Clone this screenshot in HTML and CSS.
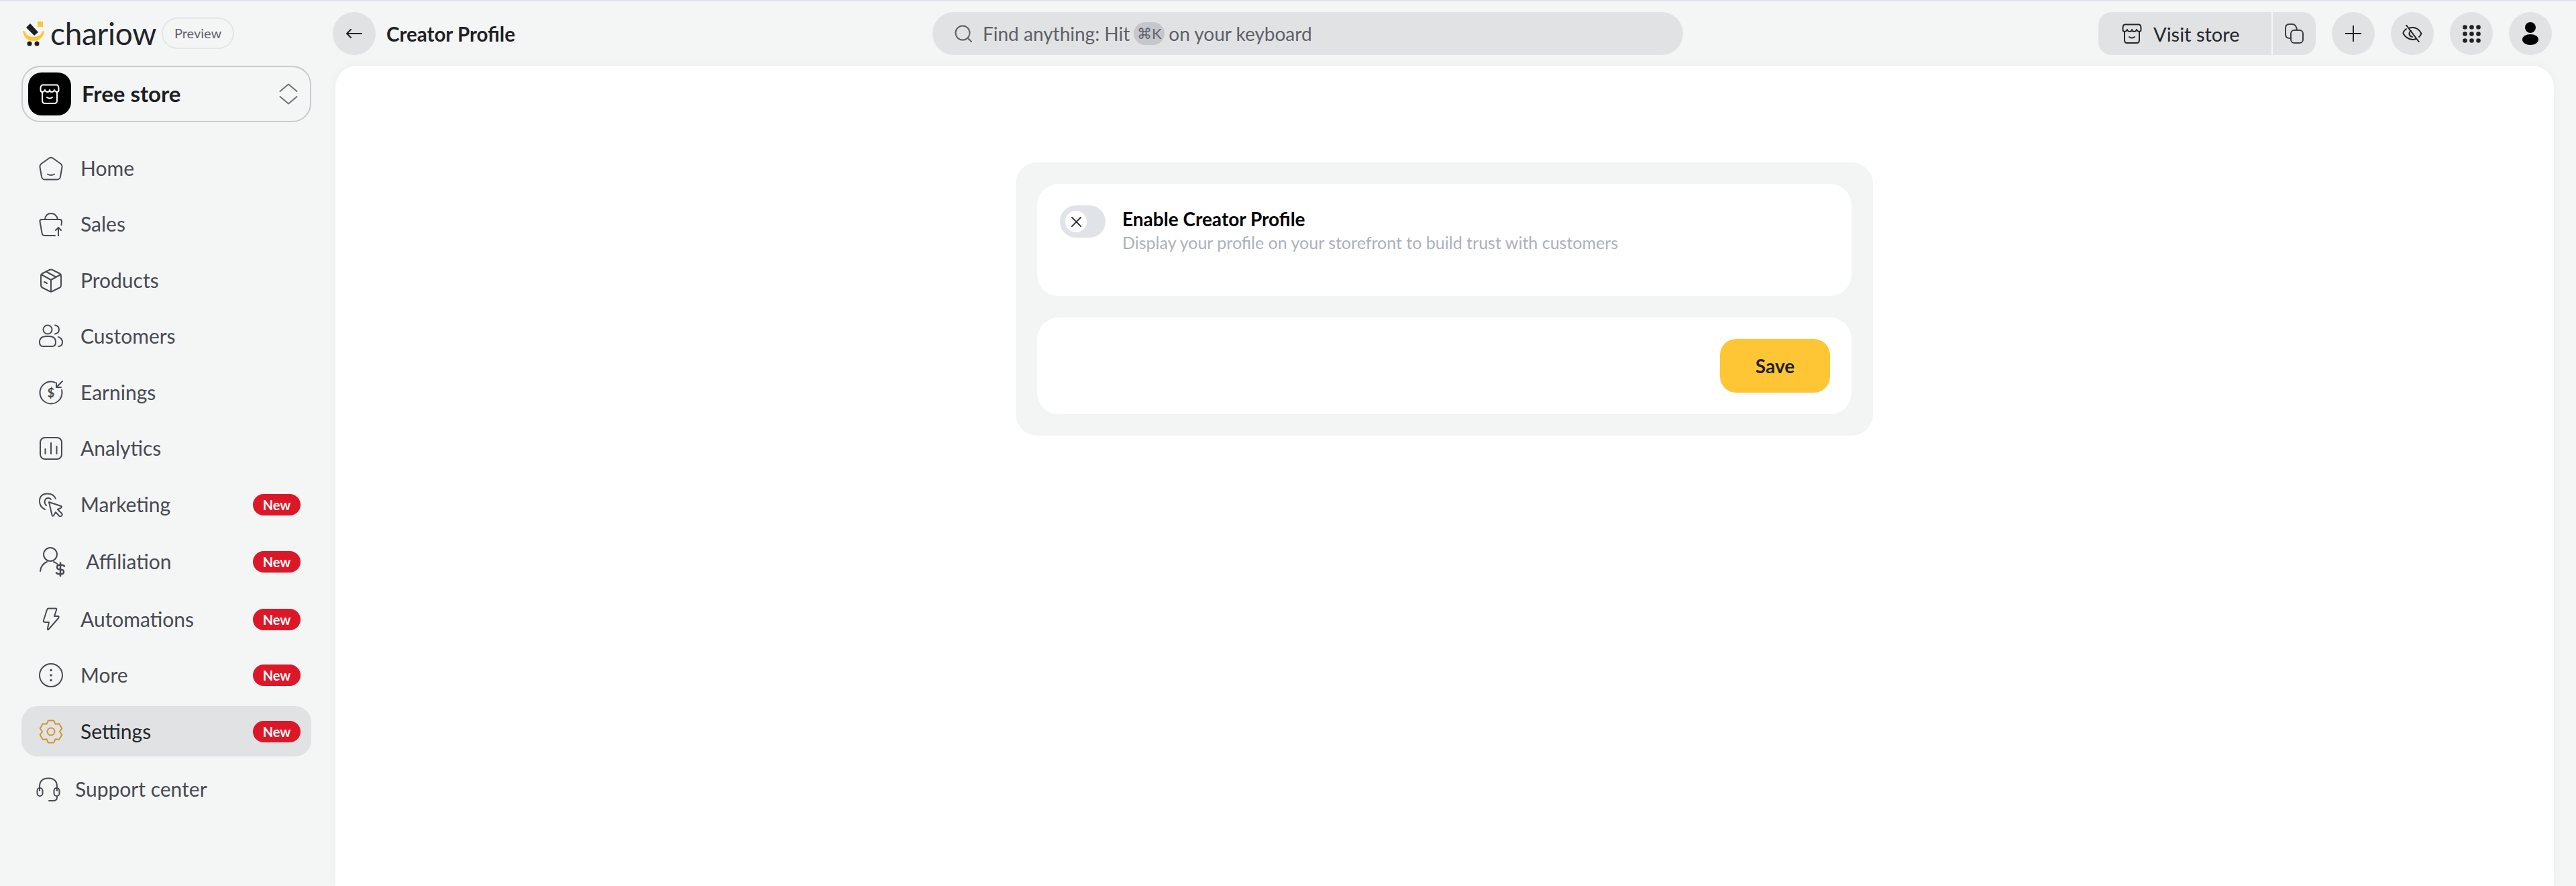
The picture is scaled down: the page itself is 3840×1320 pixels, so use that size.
FILE: index.html
```html
<!DOCTYPE html>
<html lang="en">
<head>
    <meta charset="UTF-8">
    <title>Creator Profile</title>
    <link rel="stylesheet" href="styles.css">
</head>
<body>
    <svg class="sprite" aria-hidden="true">
        <symbol id="store" viewBox="0 0 30 30">
            <path d="M4 12 V25 Q4 29 8 29 H22 Q26 29 26 25 V12"/>
            <path d="M5 1.500 H25 Q28 1.500 28.500 6 V9 Q28.500 12 26 12 Q23 12 22 9 Q21 12 18.500 12 Q15 12 15 9 Q15 12 11.500 12 Q9 12 8 9 Q7 12 4 12 Q1.500 12 1.500 9 V6 Q2 1.500 5 1.500 Z"/>
            <path d="M11 20 Q15 23 19 20"/>
        </symbol>
    </svg>

    <div class="top-strip"></div>
    <div class="app">
        <aside class="sidebar">
            <div class="brand">
                <svg class="brand-mark" viewBox="0 0 36 38">
                    <path d="M2 16 Q5 30 18 30 Q31 30 34 16 Q33 14 31 16 Q28 24 18 24 Q8 24 5 16 Q3 14 2 16 Z" fill="#fec635"/>
                    <rect x="24" y="1" width="8" height="8" fill="#fec635"/>
                    <path d="M7 10 L13 4 L25 17 L19 22 Z" fill="#1d1f24"/>
                    <circle cx="12" cy="34" r="3.500" fill="#1d1f24"/>
                    <circle cx="23" cy="34" r="3.500" fill="#1d1f24"/>
                </svg>
                <span class="brand-name">chariow</span>
                <span class="preview-pill">Preview</span>
            </div>

            <button class="store-select">
                <span class="store-icon"><svg class="icon-store-light"><use href="#store"/></svg></span>
                <span class="store-name">Free store</span>
                <svg class="chevrons" viewBox="0 0 28 32"><path d="M1.500 12 L14 1.500 L26.500 12 M1.500 20 L14 30.500 L26.500 20"/></svg>
            </button>

            <nav class="nav">
                <a class="nav-item">
                    <svg class="nav-icon" viewBox="0 0 36 36"><path d="M15.500 2.500 Q18 .8 20.500 2.500 L32.500 11 Q35 13 34.500 16 L32 30 Q31.500 34.500 27 34.500 H9 Q4.500 34.500 4 30 L1.500 16 Q1 13 3.500 11 Z"/><path d="M13 26.500 Q18 29.500 23 26.500"/></svg>
                    <span>Home</span>
                </a>
                <a class="nav-item">
                    <svg class="nav-icon" viewBox="0 0 36 36"><path d="M9 11 Q10 2 18 2 Q26 2 28 11"/><path d="M24 35 H9 Q5 35 4.500 31 L1.500 14 Q1 11 4 11 H31 Q34 11 34 14 L33.500 19"/><path d="M29 36 V23 M25 27 L29 23 L33 27"/></svg>
                    <span>Sales</span>
                </a>
                <a class="nav-item">
                    <svg class="nav-icon" viewBox="0 0 36 36"><path d="M16 2 Q18 1 20 2 L31 7.500 Q33 8.500 33 11 V25 Q33 27.500 31 28.500 L20 34 Q18 35 16 34 L5 28.500 Q3 27.500 3 25 V11 Q3 8.500 5 7.500 Z"/><path d="M3.500 9 L18 17 L32.500 9 M18 17 V34.500 M10.500 4.500 L25 12.500 M8 20 L12 22"/></svg>
                    <span>Products</span>
                </a>
                <a class="nav-item">
                    <svg class="nav-icon" viewBox="0 0 36 36"><circle cx="13" cy="8" r="6.500"/><path d="M24 1.500 Q30 2.500 30 8 Q30 13.500 24 14.500"/><path d="M1 27 Q1 18 11 18 H15 Q25 18 25 27 Q25 33 20 33 H6 Q1 33 1 27 Z"/><path d="M29 19 Q35 21 35 27 Q35 33 29 33"/></svg>
                    <span>Customers</span>
                </a>
                <a class="nav-item">
                    <svg class="nav-icon" viewBox="0 0 36 36"><path d="M24 3 Q21 1.500 18 1.500 A16.500 16.500 0 1 0 34.500 18 Q34.500 15.500 34 14"/><path d="M35 1 L26 10 M26 3.500 V10 H33"/><text class="icon-text" x="18" y="24.500" text-anchor="middle">$</text></svg>
                    <span>Earnings</span>
                </a>
                <a class="nav-item">
                    <svg class="nav-icon" viewBox="0 0 36 36"><rect x="2" y="2" width="32" height="32" rx="7"/><path d="M9.500 19 V26 M18 10 V26 M26.500 15 V26"/></svg>
                    <span>Analytics</span>
                </a>
                <a class="nav-item">
                    <svg class="nav-icon" viewBox="0 0 36 36"><path d="M9 25 Q1 21 1 13 Q1 1.500 13 1.500 Q22 1.500 25 9"/><path d="M11 19 Q8 16 8.500 12.500 Q10 8 14 8 Q16.500 8 18 10"/><path d="M15 14 L33 20 Q35 21 33 22.500 L28 25 L34 31 Q36 33 33 35 Q31.500 36 30 34.500 L25 29 L22 34 Q20.500 36 19.500 33.500 Z"/></svg>
                    <span>Marketing</span>
                    <em class="badge">New</em>
                </a>
                <a class="nav-item nav-item-wide">
                    <svg class="nav-icon-wide" viewBox="0 0 42 44"><circle cx="17" cy="11" r="10"/><path d="M2 36 Q3 26 12 22 M22 22 Q26 23.500 28 26"/><path d="M38 28.500 Q36 26.500 32 26.500 Q27 26.500 27 30 Q27 33.500 32 33.500 Q37 33.500 37 37 Q37 40.500 32 40.500 Q28 40.500 26 38.500 M32 23.500 V43.500" stroke-width="2.500"/></svg>
                    <span>Affiliation</span>
                    <em class="badge">New</em>
                </a>
                <a class="nav-item">
                    <svg class="nav-icon" viewBox="0 0 36 36"><path d="M14 1.500 H25 Q27 1.500 26 4 L23 13 H28 Q31 13 29 16 L15 32 Q12.500 35 13 31 L15 22 H9.500 Q6 22 7 19 L12 3.500 Q12.500 1.500 14 1.500 Z"/></svg>
                    <span>Automations</span>
                    <em class="badge">New</em>
                </a>
                <a class="nav-item">
                    <svg class="nav-icon" viewBox="0 0 36 36"><circle cx="18" cy="18" r="17"/><path class="icon-dots" d="M18 10.500 V10.600 M18 18 V18.100 M18 25.500 V25.600"/></svg>
                    <span>More</span>
                    <em class="badge">New</em>
                </a>
                <a class="nav-item nav-item-active">
                    <svg class="nav-icon" viewBox="0 0 36 36"><path d="M11.500 6.700 L13.900 1.500 H22.100 L24.500 6.700 L30.200 6.200 L34.300 13.300 L31 18 L34.300 22.700 L30.200 29.800 L24.500 29.300 L22.100 34.500 H13.900 L11.500 29.300 L5.800 29.800 L1.700 22.700 L5 18 L1.700 13.300 L5.800 6.200 Z"/><circle cx="18" cy="18" r="5.500"/></svg>
                    <span>Settings</span>
                    <em class="badge">New</em>
                </a>
                <a class="nav-item nav-item-support">
                    <svg class="nav-icon" viewBox="0 0 36 36"><path d="M5 20 V14 Q5 1.500 18 1.500 Q31 1.500 31 14 V20"/><rect x="1.500" y="16" width="8" height="12" rx="4"/><rect x="26.500" y="16" width="8" height="12" rx="4"/><path d="M31 28 V30 Q31 35 25 35 H19"/></svg>
                    <span>Support center</span>
                </a>
            </nav>
        </aside>

        <div class="main">
            <header class="topbar">
                <div class="page-title">
                    <button class="round-btn"><svg class="icon-back" viewBox="0 0 24 14"><path d="M24 7 H1 M7 1 L1 7 L7 13"/></svg></button>
                    <h1>Creator Profile</h1>
                </div>
                <div class="search">
                    <svg class="icon-search" viewBox="0 0 26 26"><circle cx="12" cy="12" r="10.500"/><path d="M20 20 L25 25"/></svg>
                    <span>Find anything: Hit</span>
                    <kbd>⌘K</kbd>
                    <span>on your keyboard</span>
                </div>
                <div class="actions">
                    <div class="visit-group">
                        <button class="visit-btn"><svg class="icon-store-dark"><use href="#store"/></svg>Visit store</button>
                        <button class="copy-btn"><svg class="icon-copy" viewBox="0 0 28 30"><rect x="9" y="10" width="18" height="19" rx="5"/><path d="M9 22 H7 Q1 22 1 16 V7 Q1 1 7 1 H11 Q17 1 18 10"/></svg></button>
                    </div>
                    <button class="round-btn"><svg class="icon-plus" viewBox="0 0 24 24"><path d="M12 0 V24 M0 12 H24"/></svg></button>
                    <button class="round-btn"><svg class="icon-eye" viewBox="0 0 30 26"><path d="M6 6 Q1 10 1.500 13 Q6 21 15 22 Q18 22 20 21 M11 4.500 Q13 4 15 4 Q24 4 28.500 13 Q27.500 16 25 18"/><path d="M13 9 Q10 11 10.500 14 Q11 17 15 18"/><path d="M6 0.500 L25 25.500"/></svg></button>
                    <button class="round-btn">
                        <svg class="icon-grid" viewBox="0 0 27 27"><circle cx="3.500" cy="3.500" r="3.300"/><circle cx="13.500" cy="3.500" r="3.300"/><circle cx="23.500" cy="3.500" r="3.300"/><circle cx="3.500" cy="13.500" r="3.300"/><circle cx="13.500" cy="13.500" r="3.300"/><circle cx="23.500" cy="13.500" r="3.300"/><circle cx="3.500" cy="23.500" r="3.300"/><circle cx="13.500" cy="23.500" r="3.300"/><circle cx="23.500" cy="23.500" r="3.300"/></svg>
                    </button>
                    <button class="round-btn"><svg class="icon-avatar" viewBox="0 0 24 34"><circle cx="12" cy="8" r="8"/><ellipse cx="12" cy="26" rx="12" ry="8"/></svg></button>
                </div>
            </header>

            <main class="content">
                <section class="card">
                    <div class="panel panel-toggle">
                        <div class="toggle">
                            <span class="knob"><svg class="icon-x" viewBox="0 0 16 16"><path d="M1 1 L15 15 M15 1 L1 15"/></svg></span>
                        </div>
                        <div class="toggle-text">
                            <h2>Enable Creator Profile</h2>
                            <p>Display your profile on your storefront to build trust with customers</p>
                        </div>
                    </div>
                    <div class="panel panel-save">
                        <button class="save-btn">Save</button>
                    </div>
                </section>
            </main>
        </div>
    </div>
</body>
</html>
```

FILE: styles.css
```css
* {
    margin: 0;
    padding: 0;
    box-sizing: border-box;
}
body {
    height: 1320px;
    overflow: hidden;
    font-family: Lato, "Liberation Sans", sans-serif;
    color: #1f2125;
    background-color: #f4f5f5;
}
button {
    border: none;
    font-family: inherit;
    cursor: pointer;
}
svg {
    fill: none;
    stroke: currentColor;
    stroke-width: 2;
    stroke-linecap: round;
    stroke-linejoin: round;
    flex-shrink: 0;
}
.sprite {
    display: none;
}
.top-strip {
    height: 2px;
    background-color: #e0e1ec;
}
.app {
    display: flex;
    height: 1318px;
}

/* sidebar */
.sidebar {
    width: 496px;
    flex-shrink: 0;
    padding: 24px 32px 0;
}
.brand {
    display: flex;
    align-items: center;
    height: 47px;
}
.brand-mark {
    width: 36px;
    height: 38px;
    stroke: none;
}
.brand-name {
    margin-left: 7px;
    font-size: 46px;
    line-height: 47px;
    letter-spacing: -.3px;
    color: #23252a;
}
.preview-pill {
    margin-left: 8px;
    width: 108px;
    height: 47px;
    border: 2px solid #e4e6e7;
    border-radius: 24px;
    font-size: 20px;
    line-height: 43px;
    text-align: center;
    color: #5f636b;
}
.store-select {
    display: flex;
    align-items: center;
    width: 432px;
    height: 84px;
    margin-top: 25px;
    padding: 0 18px 0 8px;
    background: none;
    border: 2px solid #c8cad0;
    border-radius: 28px;
}
.store-icon {
    display: flex;
    align-items: center;
    justify-content: center;
    width: 64px;
    height: 64px;
    background-color: #000;
    border-radius: 20px;
}
.icon-store-light {
    width: 30px;
    height: 30px;
    color: #fff;
}
.store-name {
    margin-left: 16px;
    padding-bottom: 2px;
    font-size: 33px;
    font-weight: 700;
    color: #1c1e22;
}
.chevrons {
    width: 28px;
    height: 32px;
    margin-left: auto;
    color: #6d7179;
}
.nav {
    display: flex;
    flex-direction: column;
    gap: 8.5px;
    margin-top: 31px;
}
.nav-item {
    display: flex;
    align-items: center;
    height: 75px;
    padding: 0 16px 0 26px;
    border-radius: 24px;
    font-size: 30px;
    color: #474a52;
}
.nav-item span {
    padding-bottom: 2px;
}
.nav-icon {
    width: 36px;
    height: 36px;
    margin-right: 26px;
}
.nav-icon-wide {
    width: 42px;
    height: 44px;
    margin-right: 28px;
}
.nav-item-wide {
    height: 79px;
}
.nav-item-active {
    background-color: #e1e2e4;
    color: #24262b;
}
.nav-item-active .nav-icon {
    color: #d4952e;
}
.nav-item-support {
    margin-top: 3px;
    padding-left: 22px;
}
.nav-item-support .nav-icon {
    margin-right: 22px;
}
.icon-text {
    font-size: 18px;
    font-weight: 700;
    fill: currentColor;
    stroke: none;
}
.icon-dots {
    stroke-width: 3.5;
}
.badge {
    margin-left: auto;
    width: 71px;
    height: 32px;
    background-color: #dc1828;
    border-radius: 16px;
    font-size: 20px;
    font-style: normal;
    font-weight: 700;
    line-height: 32px;
    text-align: center;
    color: #fff;
}

/* top bar */
.main {
    flex: 1;
    min-width: 0;
    display: flex;
    flex-direction: column;
}
.topbar {
    display: flex;
    align-items: center;
    height: 96px;
    flex-shrink: 0;
    padding-right: 36px;
}
.page-title {
    display: flex;
    align-items: center;
    gap: 16px;
    width: 894px;
}
h1 {
    font-size: 29.5px;
    font-weight: 700;
    color: #1f2125;
}
.round-btn {
    display: flex;
    align-items: center;
    justify-content: center;
    width: 64px;
    height: 64px;
    background-color: #e1e2e4;
    border-radius: 50%;
    color: #1f2125;
}
.icon-back {
    width: 24px;
    height: 14px;
}
.search {
    display: flex;
    align-items: center;
    gap: 6px;
    width: 1119px;
    height: 64px;
    padding-left: 33px;
    background-color: #e1e2e4;
    border-radius: 32px;
    font-size: 28px;
    color: #5d6068;
}
.icon-search {
    width: 26px;
    height: 26px;
    margin-right: 10px;
}
kbd {
    width: 46px;
    height: 34px;
    background-color: #c5c7cc;
    border-radius: 17px;
    font-family: inherit;
    font-size: 22px;
    line-height: 34px;
    text-align: center;
}
.actions {
    display: flex;
    align-items: center;
    gap: 24px;
    margin-left: auto;
}
.visit-group {
    display: flex;
    gap: 2px;
    height: 64px;
}
.visit-btn {
    display: flex;
    align-items: center;
    gap: 17px;
    width: 258px;
    padding-left: 35px;
    background-color: #e1e2e4;
    border-radius: 20px 0 0 20px;
    font-size: 29px;
    color: #24262b;
}
.icon-store-dark {
    width: 30px;
    height: 30px;
}
.copy-btn {
    display: flex;
    align-items: center;
    justify-content: center;
    width: 64px;
    background-color: #e1e2e4;
    border-radius: 0 20px 20px 0;
    color: #3c3f46;
}
.icon-copy {
    width: 28px;
    height: 30px;
}
.icon-plus {
    width: 24px;
    height: 24px;
}
.icon-eye {
    width: 30px;
    height: 26px;
}
.icon-grid {
    width: 27px;
    height: 27px;
    fill: #1f2125;
    stroke: none;
}
.icon-avatar {
    width: 24px;
    height: 34px;
    fill: #000;
    stroke: none;
}

/* page body */
.content {
    flex: 1;
    display: flex;
    justify-content: center;
    align-items: flex-start;
    margin: 0 33px 0 4px;
    padding: 144px 1px 0 0;
    background-color: #fff;
    border-radius: 32px 32px 0 0;
    box-shadow: 0 0 16px rgba(0, 0, 0, .04);
}
.card {
    display: flex;
    flex-direction: column;
    gap: 32px;
    width: 1278px;
    padding: 32px;
    background-color: #f3f4f4;
    border-radius: 32px;
}
.panel {
    display: flex;
    background-color: #fff;
    border-radius: 32px;
}
.panel-toggle {
    gap: 25px;
    height: 167px;
    padding: 32px 34px;
}
.panel-save {
    justify-content: flex-end;
    height: 144px;
    padding: 32px;
}
.toggle {
    display: flex;
    align-items: center;
    width: 68px;
    height: 48px;
    padding-left: 8px;
    background-color: #e0e3e8;
    border-radius: 24px;
}
.knob {
    display: flex;
    align-items: center;
    justify-content: center;
    width: 32px;
    height: 32px;
    background-color: #fff;
    border-radius: 50%;
}
.icon-x {
    width: 15px;
    height: 15px;
    color: #24262b;
}
.toggle-text h2 {
    font-size: 28px;
    font-weight: 700;
    line-height: 40px;
    color: #000;
}
.toggle-text p {
    font-size: 25px;
    line-height: 30px;
    color: #a9b1bf;
}
.save-btn {
    width: 164px;
    height: 80px;
    background-color: #fec635;
    border-radius: 24px;
    font-size: 28px;
    font-weight: 700;
    color: #1f2125;
}
```
